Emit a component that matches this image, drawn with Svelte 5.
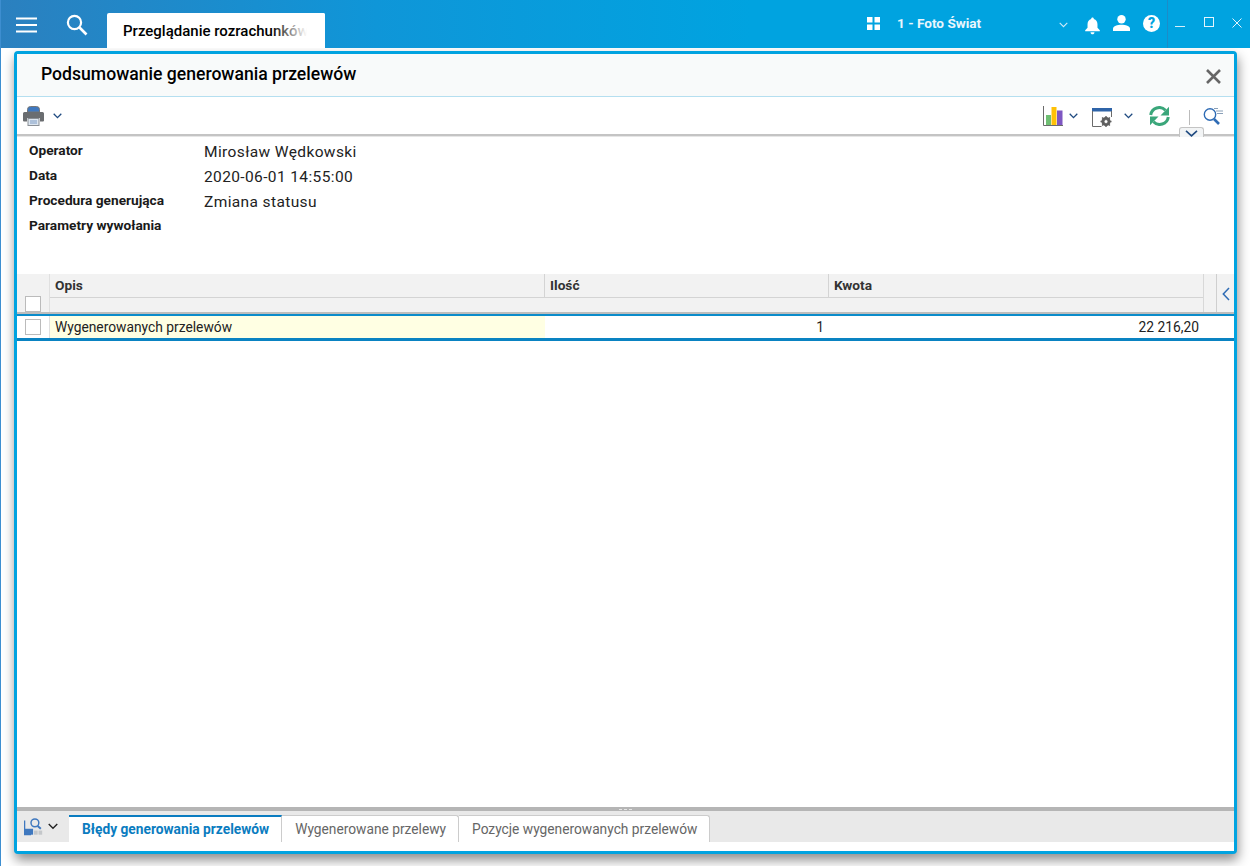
<script lang="ts">
  const info = [
    { label: 'Operator', value: 'Mirosław Wędkowski' },
    { label: 'Data', value: '2020-06-01 14:55:00' },
    { label: 'Procedura generująca', value: 'Zmiana statusu' },
    { label: 'Parametry wywołania', value: '' }
  ];
  const tabs = ['Błędy generowania przelewów', 'Wygenerowane przelewy', 'Pozycje wygenerowanych przelewów'];
</script>

<div class="page">
  <header class="topbar">
    <button class="menu" aria-label="menu">
      <svg width="22" height="16" viewBox="0 0 22 16"><path d="M0 1.5h21M0 8h21M0 14.5h21" stroke="#fff" stroke-width="2.2" fill="none" /></svg>
    </button>
    <button class="search" aria-label="szukaj">
      <svg width="22" height="22" viewBox="0 0 22 22"><circle cx="8.5" cy="8.5" r="6.6" stroke="#fff" stroke-width="2.2" fill="none" /><path d="M13.5 13.5l7 7" stroke="#fff" stroke-width="2.6" fill="none" /></svg>
    </button>
    <div class="doc-tab"><span>Przeglądanie rozrachunków</span></div>
    <div class="company">
      <svg width="13" height="13" viewBox="0 0 13 13" fill="#fff"><rect width="5.5" height="5.5" /><rect x="7.5" width="5.5" height="5.5" /><rect y="7.5" width="5.5" height="5.5" /><rect x="7.5" y="7.5" width="5.5" height="5.5" /></svg>
      <span>1 - Foto Świat</span>
    </div>
    <svg class="company-arrow" width="9" height="6" viewBox="0 0 9 6"><path d="M.7 .8l3.8 3.8L8.300 .8" stroke="#cfeaf8" stroke-width="1.1" fill="none" /></svg>
    <svg class="bell" width="15" height="18" viewBox="0 0 16 18" fill="#fff"><path d="M8 0c.9 0 1.400.6 1.400 1.500C12 2.200 13.300 4.400 13.300 7.200v3.600L15.800 13.600v1H.2v-1L2.700 10.800V7.200C2.700 4.400 4 2.200 6.600 1.500 6.600 .6 7.100 0 8 0zM5.900 15.600h4.200C10 17 9.100 17.800 8 17.800S6 17 5.900 15.600z" /></svg>
    <svg class="user" width="17" height="16" viewBox="0 0 17 16" fill="#fff"><circle cx="8.500" cy="4.200" r="4.200" /><path d="M0 16v-2.200C0 11 4.500 9.700 8.500 9.700S17 11 17 13.800V16z" /></svg>
    <div class="help">?</div>
    <div class="win-controls">
      <svg width="11" height="11" viewBox="0 0 11 11"><path d="M0 9.500h10" stroke="#d5eefa" stroke-width="1" fill="none" /></svg>
      <svg width="10" height="10" viewBox="0 0 10 10"><rect x=".5" y=".5" width="9" height="9" stroke="#e3f4fc" fill="none" /></svg>
      <svg class="win-x" width="10" height="10" viewBox="0 0 10 10"><path d="M.5 .5l9 9M9.500 .5l-9 9" stroke="#e3f4fc" fill="none" /></svg>
    </div>
  </header>

  <main class="workspace">
    <section class="dialog">
      <div class="title-bar">
        <h1>Podsumowanie generowania przelewów</h1>
        <button class="close" aria-label="zamknij">
          <svg width="15" height="15" viewBox="0 0 15 15"><path d="M1 1l13 13M14 1L1 14" stroke="#666" stroke-width="2.600" fill="none" /></svg>
        </button>
      </div>

      <div class="toolbar">
        <svg class="printer" width="21" height="20" viewBox="0 0 21 20">
          <path d="M4.500 6V3.500Q4.500 .5 7.500 .5h6q3 0 3 3V6z" fill="#3f78bf" stroke="#777" stroke-width="1" />
          <path d="M1.500 6h18q1.500 0 1.500 1.500v7q0 1-1 1h-3V12H4v3.500H1q-1 0-1-1v-7Q0 6 1.500 6z" fill="#6a6d70" />
          <rect x="5" y="12.500" width="11" height="7" fill="#dde6f0" stroke="#8a8f95" stroke-width="1" />
          <path d="M7 15h7M7 17h7" stroke="#7e9cc4" stroke-width="1" />
        </svg>
        <svg class="chev" width="9" height="6" viewBox="0 0 9 6"><path d="M.7 .8l3.800 3.800L8.300 .8" stroke="#1f4a80" stroke-width="1.300" fill="none" /></svg>
        <div class="spacer"></div>
        <svg class="chart" width="20" height="20" viewBox="0 0 20 20">
          <path d="M.5 0v19.500H20" stroke="#6b6b6b" fill="none" />
          <rect x="3" y="9" width="5" height="10" fill="#6fbf73" />
          <rect x="8.500" y="1" width="5" height="18" fill="#ffc107" />
          <rect x="14" y="4.500" width="5.500" height="14.500" fill="#7e57c2" />
        </svg>
        <svg class="chev c1" width="9" height="6" viewBox="0 0 9 6"><path d="M.7 .8l3.800 3.800L8.300 .8" stroke="#1f4a80" stroke-width="1.300" fill="none" /></svg>
        <svg class="settings" width="20" height="19" viewBox="0 0 20 19">
          <rect x="0" y="0" width="20" height="3.500" fill="#2f64a8" />
          <path d="M.5 3v15.500h9M19.500 3v6" stroke="#6b6b6b" fill="none" />
          <circle cx="14" cy="13.500" r="3.400" fill="none" stroke="#5f5f5f" stroke-width="2.400" />
          <path d="M14 8v11M8.500 13.500h11M10.100 9.600l7.800 7.800M17.900 9.600l-7.800 7.800" stroke="#5f5f5f" stroke-width="1.400" />
          <circle cx="14" cy="13.500" r="1.500" fill="#fff" />
        </svg>
        <svg class="chev c2" width="9" height="6" viewBox="0 0 9 6"><path d="M.7 .8l3.800 3.800L8.300 .8" stroke="#1f4a80" stroke-width="1.300" fill="none" /></svg>
        <svg class="refresh" width="21" height="20" viewBox="0 0 21 20" fill="none">
          <path d="M1.700 9A8.600 8.600 0 0 1 16.500 4.300" stroke="#3aa67a" stroke-width="3" />
          <path d="M20 .8v8.700h-8.500z" fill="#3aa67a" />
          <path d="M19.300 11A8.600 8.600 0 0 1 4.500 15.700" stroke="#3aa67a" stroke-width="3" />
          <path d="M1 19.200v-8.700h8.500z" fill="#3aa67a" />
        </svg>
        <div class="sep"></div>
        <svg class="find" width="21" height="19" viewBox="0 0 21 19" fill="none">
          <circle cx="7" cy="7.500" r="5.700" stroke="#2f6cb5" stroke-width="1.400" />
          <path d="M11 12l5 5" stroke="#2f6cb5" stroke-width="2.600" />
          <path d="M11 1.500h4M13 4h7M14 6.500h6" stroke="#8aa0b8" stroke-width="1.100" />
        </svg>
      </div>

      <div class="toolbar-rule">
        <div class="collapse">
          <svg width="13" height="7" viewBox="0 0 13 7"><path d="M1 .8l5.500 5 5.500-5" stroke="#1f4a80" stroke-width="1.600" fill="none" /></svg>
        </div>
      </div>

      <div class="info">
        {#each info as row}
          <div class="info-row">
            <div class="info-label">{row.label}</div>
            <div class="info-value">{row.value}</div>
          </div>
        {/each}
      </div>

      <div class="grid">
        <div class="grid-head">
          <div class="check-col">
            <span class="box head-box"></span>
          </div>
          <div class="head-main">
            <div class="head-titles">
              <div class="col-opis">Opis</div>
              <div class="col-ilosc">Ilość</div>
              <div class="col-kwota">Kwota</div>
            </div>
            <div class="head-filter"></div>
          </div>
          <div class="head-side">
            <svg width="8" height="14" viewBox="0 0 8 14"><path d="M7 1L1.300 7 7 13" stroke="#2f6cb5" stroke-width="1.500" fill="none" /></svg>
          </div>
        </div>
        <div class="grid-row">
          <div class="check-col row-check"><span class="box"></span></div>
          <div class="cell-opis">Wygenerowanych przelewów</div>
          <div class="cell-ilosc">1</div>
          <div class="cell-kwota">22 216,20</div>
        </div>
      </div>

      <div class="filler"></div>

      <div class="splitter"><span></span></div>
      <div class="tab-strip">
        <div class="tab-tool">
          <svg width="20" height="19" viewBox="0 0 22 19" fill="none">
            <path d="M.7 3v15.300h7" stroke="#3f78bf" stroke-width="1.400" />
            <rect x="1" y="12" width="9" height="6.500" fill="#3f78bf" />
            <rect x="11" y="14" width="4" height="4.500" fill="#c4c7ca" />
            <rect x="16" y="14" width="4" height="4.500" fill="#c4c7ca" />
            <circle cx="12" cy="5.500" r="4.300" stroke="#3f78bf" stroke-width="1.600" />
            <path d="M15 9l3.500 3" stroke="#3f78bf" stroke-width="2.200" />
          </svg>
          <svg width="10" height="7" viewBox="0 0 11 7"><path d="M.8 .8l4.700 4.700L10.200 .8" stroke="#222" stroke-width="1.500" fill="none" /></svg>
        </div>
        {#each tabs as tab, i}
          <div class="tab" class:active={i === 0}>{tab}</div>
        {/each}
      </div>
      <div class="dialog-foot"></div>
    </section>
  </main>
</div>

<style>
  :global(body) {
    margin: 0;
    background: #fff;
  }

  .page {
    width: 1250px;
    height: 866px;
    display: flex;
    flex-direction: column;
    font-family: Roboto, "Liberation Sans", sans-serif;
    color: #111;
    overflow: hidden;
    background: #fff;
    border-left: 1px solid #3d8ed0;
    box-sizing: border-box;
  }

  button {
    background: none;
    border: none;
    padding: 0;
    display: flex;
  }

  .topbar {
    height: 48px;
    flex: none;
    display: flex;
    background: linear-gradient(90deg, #2b80bf 0%, #0f96d8 30%, #00a3e0 60%);
    position: relative;
  }

  .menu {
    margin: 17px 0 0 15px;
    height: 16px;
  }

  .search {
    margin: 14px 0 0 28px;
    height: 22px;
  }

  .doc-tab {
    margin: 13px 0 0 19px;
    width: 218px;
    height: 35px;
    background: #fff;
    border-radius: 2px 2px 0 0;
    padding: 9px 0 0 16px;
    box-sizing: border-box;
    font-size: 15px;
    font-weight: 500;
    color: #000;
    position: relative;
    white-space: nowrap;
    overflow: hidden;
  }

  .doc-tab::after {
    content: "";
    position: absolute;
    top: 0;
    bottom: 0;
    right: 14px;
    width: 40px;
    background: linear-gradient(90deg, rgba(255, 255, 255, 0), #fff 90%);
  }

  .doc-tab::before {
    content: "";
    position: absolute;
    top: 0;
    bottom: 0;
    right: 0;
    width: 15px;
    background: #fff;
    z-index: 1;
  }

  .company {
    margin: 16px 0 0 542px;
    display: flex;
    gap: 17px;
    height: 14px;
    align-items: center;
    color: #e8f6fd;
    font-size: 13.6px;
    font-weight: 700;
    width: 194px;
    flex: none;
  }

  .company-arrow {
    margin: 22px 0 0 -2px;
    flex: none;
  }

  .bell {
    margin: 17px 0 0 17px;
    flex: none;
  }

  .user {
    margin: 15px 0 0 13px;
    flex: none;
  }

  .help {
    margin: 15px 0 0 13px;
    width: 17px;
    height: 17px;
    flex: none;
    border-radius: 50%;
    background: #fff;
    color: #00a3e0;
    font-size: 14px;
    font-weight: 900;
    line-height: 17px;
    text-align: center;
  }

  .win-controls {
    margin-left: 7px;
    padding: 17px 0 0 7px;
    display: flex;
    gap: 18px;
    align-items: flex-start;
    border-left: 1px solid #1c8cc8;
    height: 48px;
    box-sizing: border-box;
    flex: 1;
  }

  .win-x {
    margin-top: 1px;
  }

  .workspace {
    flex: 1;
    min-height: 0;
    display: flex;
    padding: 3px 13px 12px 13px;
    background: #fff;
  }

  .dialog {
    flex: 1;
    display: flex;
    flex-direction: column;
    border: 3px solid #00a3e0;
    border-radius: 4px;
    background: #fff;
    box-shadow: 1px 6px 12px rgba(0, 0, 0, 0.45);
    min-width: 0;
  }

  .title-bar {
    height: 42px;
    flex: none;
    display: flex;
    align-items: center;
    background: #f8fafa;
    border-bottom: 1px solid #b5dff0;
  }

  h1 {
    margin: 0 0 2px 24px;
    font-size: 17.6px;
    font-weight: 500;
    color: #000;
    flex: 1;
  }

  .close {
    margin: 2px 13px 0 0;
  }

  .toolbar {
    height: 37px;
    flex: none;
    display: flex;
    align-items: center;
    padding: 1px 10px 0 6px;
    box-sizing: border-box;
  }

  .chev {
    margin-left: 9px;
  }

  .spacer {
    flex: 1;
  }

  .chev.c1 {
    margin: 0 0 0 6px;
  }

  .settings {
    margin: 2px 0 0 14px;
  }

  .chev.c2 {
    margin: 0 0 0 12px;
  }

  .refresh {
    margin-left: 16px;
  }

  .sep {
    width: 1px;
    height: 15px;
    background: #bbb;
    margin: 2px 0 0 19px;
  }

  .find {
    margin: 0 0 0 13px;
  }

  .toolbar-rule {
    height: 2px;
    flex: none;
    background: #c4c4c4;
    position: relative;
    border-bottom: 1px solid #e6e6e6;
  }

  .collapse {
    position: absolute;
    right: 30px;
    top: -7px;
    width: 25px;
    height: 10px;
    background: #f2f4f5;
    border: 1px solid #c4c4c4;
    border-bottom: none;
    border-radius: 3px 3px 0 0;
    display: flex;
    justify-content: center;
    padding-top: 2px;
    box-sizing: border-box;
    z-index: 1;
  }

  .info {
    flex: none;
    height: 137px;
    padding: 2px 0 0 12px;
    box-sizing: border-box;
  }

  .info-row {
    height: 25px;
    display: flex;
    align-items: center;
  }

  .info-label {
    width: 175px;
    font-size: 13.7px;
    font-weight: 700;
    color: #1a1a1a;
    margin-top: -3px;
    white-space: nowrap;
  }

  .info-value {
    font-size: 15.5px;
    letter-spacing: 0.38px;
    color: #222;
  }

  .grid {
    flex: none;
  }

  .grid-head {
    display: flex;
    height: 38px;
    background: #f2f2f2;
    border-bottom: 2px solid #bdbdbd;
  }

  .check-col {
    width: 32px;
    flex: none;
    border-right: 1px solid #e0e0e0;
    display: flex;
    justify-content: center;
    box-sizing: content-box;
  }

  .box {
    width: 14px;
    height: 14px;
    background: #fff;
    border: 1px solid #bbb;
    display: block;
  }

  .head-box {
    margin-top: 22px;
  }

  .head-main {
    width: 1154px;
    flex: none;
    display: flex;
    flex-direction: column;
    border-right: 1px solid #d8d8d8;
    box-sizing: border-box;
  }

  .head-titles {
    display: flex;
    height: 24px;
    border-bottom: 1px solid #d4d4d4;
    box-sizing: border-box;
    font-size: 13.7px;
    font-weight: 700;
    color: #333;
    line-height: 22px;
  }

  .col-opis {
    width: 495px;
    padding-left: 5px;
    box-sizing: border-box;
    border-right: 1px solid #d4d4d4;
  }

  .col-ilosc {
    width: 284px;
    padding-left: 5px;
    box-sizing: border-box;
    border-right: 1px solid #d4d4d4;
  }

  .col-kwota {
    padding-left: 5px;
  }

  .head-filter {
    flex: 1;
  }

  .head-side {
    flex: 1;
    margin-left: 12px;
    border-left: 1px solid #cfcfcf;
    display: flex;
    padding: 13px 0 0 5px;
    box-sizing: border-box;
  }

  .grid-row {
    display: flex;
    border-top: 2px solid #0a8ccb;
    border-bottom: 3px solid #0a83c2;
    height: 22px;
    font-size: 13.8px;
    line-height: 23px;
    color: #222;
  }

  .row-check {
    border-right: 1px solid #e0e0e0;
    padding-top: 3px;
    height: 19px;
  }

  .cell-opis {
    width: 495px;
    background: #ffffe3;
    padding-left: 5px;
    box-sizing: border-box;
  }

  .cell-ilosc {
    width: 279px;
    text-align: right;
    box-sizing: border-box;
  }

  .cell-kwota {
    width: 375px;
    text-align: right;
  }

  .filler {
    flex: 1;
  }

  .splitter {
    height: 4px;
    flex: none;
    background: #b5b5b5;
    display: flex;
    justify-content: center;
  }

  .splitter span {
    width: 13px;
    height: 0;
    margin-top: 2px;
    border-top: 1px dashed #e6e6e6;
  }

  .tab-strip {
    height: 31px;
    flex: none;
    display: flex;
    align-items: flex-end;
    background: #e9e9e9;
    font-size: 13.75px;
  }

  .tab-tool {
    width: 52px;
    height: 31px;
    flex: none;
    display: flex;
    align-items: center;
    gap: 4px;
    padding-left: 7px;
    box-sizing: border-box;
  }

  .tab {
    height: 27px;
    box-sizing: border-box;
    padding: 0 12px 0 13px;
    line-height: 26px;
    background: #fff;
    color: #666;
    border: 1px solid #ccc;
    border-left: none;
    border-bottom: none;
    border-radius: 0 3px 0 0;
    white-space: nowrap;
  }

  .tab.active {
    color: #0a7cc0;
    font-weight: 700;
    border-top: 2px solid #0a7cc0;
    border-right: 1px solid #ccc;
    padding: 0 12px 0 13px;
    line-height: 25px;
    border-radius: 0;
  }

  .dialog-foot {
    height: 9px;
    flex: none;
    background: #fff;
  }
</style>
